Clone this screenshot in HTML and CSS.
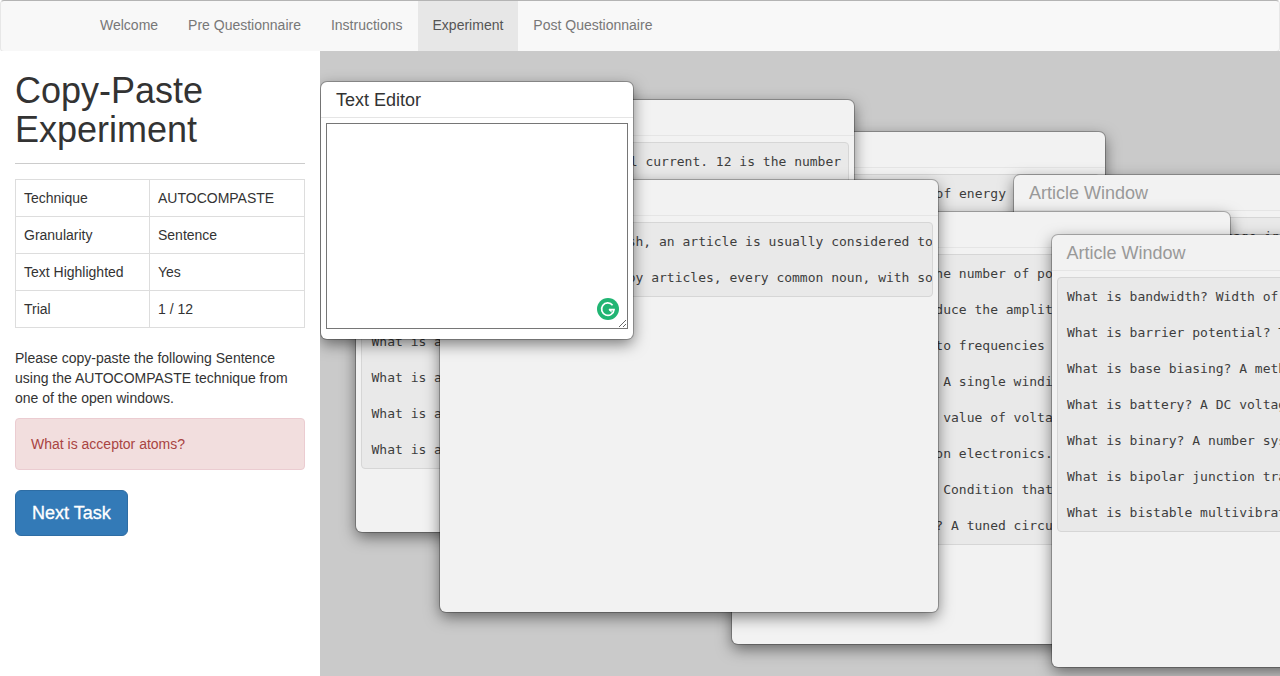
FILE: index.html
```html
<!DOCTYPE html>
<html lang="en">
<head>
  <meta charset="UTF-8">
  <meta name="viewport" content="width=device-width, initial-scale=1.0">
  <title>Copy-Paste Experiment</title>
  <link rel="stylesheet" href="styles.css">
</head>
<body>
  <nav class="navbar">
    <ul class="nav-links">
      <li><a href="#">Welcome</a></li>
      <li><a href="#">Pre Questionnaire</a></li>
      <li><a href="#">Instructions</a></li>
      <li class="active"><a href="#">Experiment</a></li>
      <li><a href="#">Post Questionnaire</a></li>
    </ul>
  </nav>

  <div class="main">
    <aside class="sidebar">
      <h1>Copy-Paste Experiment</h1>
      <hr>
      <table>
        <tbody>
          <tr><td class="label">Technique</td><td>AUTOCOMPASTE</td></tr>
          <tr><td class="label">Granularity</td><td>Sentence</td></tr>
          <tr><td class="label">Text Highlighted</td><td>Yes</td></tr>
          <tr><td class="label">Trial</td><td>1 / 12</td></tr>
        </tbody>
      </table>
      <p class="instructions">Please copy-paste the following Sentence using the AUTOCOMPASTE technique from one of the open windows.</p>
      <div class="alert">What is acceptor atoms?</div>
      <button class="btn-next" type="button">Next Task</button>
    </aside>

    <section class="desktop">
      <div class="window win-b">
        <div class="window-title">Article Window</div>
<pre>What is ampere-hour? A practical amount of energy storage in a cell</pre>
      </div>

      <div class="window win-a">
        <div class="window-title">Article Window</div>
<pre>What is 12 AWG? A wire for typical current. 12 is the number of the gauge

What is a resistor? A part that limits the current in a circuit

What is a capacitor? A part that stores an electric charge

What is a diode? A part that passes current in one direction

What is a fuse? A part that opens when the current is too high

What is ac? A current that changes direction at regular times

What is active region? The region where a transistor amplifies

What is admittance? The reciprocal of the impedance of a circuit

What is alternator? A generator that produces an alternating current</pre>
      </div>

      <div class="window win-e">
        <div class="window-title">Article Window</div>
<pre>What is bias? A diode voltage in a forward direction</pre>
      </div>

      <div class="window win-d">
        <div class="window-title">Article Window</div>
<pre>What is armature pole? the number of poles in the response

What is attenuate? To reduce the amplitude of a signal

What is audio? Relating to frequencies that can be heard

What is autotransformer? A single winding with several taps

What is average voltage? value of voltage over one full cycle

What is avionics? Based on electronics. Used in an aircraft

What is avalanche point? Condition that starts a reverse current

What is band-pass filter? A tuned circuit that passes one band</pre>
      </div>

      <div class="window win-c">
        <div class="window-title">Article Window</div>
<pre>Article note: In English, an article is usually considered to be a type of adjective

In languages that employ articles, every common noun, with some exceptions, is expressed</pre>
      </div>

      <div class="window win-f">
        <div class="window-title">Article Window</div>
<pre>What is bandwidth? Width of the range of frequencies

What is barrier potential? The voltage across a junction

What is base biasing? A method of biasing a transistor

What is battery? A DC voltage source made of cells

What is binary? A number system with only two digits

What is bipolar junction transistor? A three terminal part

What is bistable multivibrator? A circuit with two states</pre>
      </div>

      <div class="window editor">
        <div class="window-title">Text Editor</div>
        <div class="editor-body">
          <textarea></textarea>
          <svg class="grammarly" width="24" height="24" viewBox="0 0 24 24">
            <circle cx="12" cy="12" r="11" fill="#21b573"/>
            <path d="M16.6 8.2A6.2 6.2 0 1 0 18 12.6h-5" fill="none" stroke="#fff" stroke-width="1.7"/>
            <path d="M12.4 12.6l3.2 3.2v-3.2z" fill="#fff"/>
          </svg>
        </div>
      </div>
    </section>
  </div>
</body>
</html>
```

FILE: styles.css
```css
* {
  box-sizing: border-box;
}

html, body {
  height: 100%;
}

body {
  margin: 0;
  overflow: hidden;
  font-family: "Liberation Sans", Arial, sans-serif;
  font-size: 14px;
  line-height: 20px;
  color: #333;
  background-color: #fff;
}

.navbar {
  height: 52px;
  margin-bottom: -1px;
  background-color: #f8f8f8;
  border: 1px solid #e7e7e7;
  border-top-color: #b4b4b4;
  border-radius: 4px;
  padding-left: 84px;
}

.nav-links {
  display: flex;
  margin: 0;
  padding: 0;
  list-style: none;
}

.nav-links a {
  display: block;
  padding: 14px 15px 16px;
  color: #777;
  text-decoration: none;
}

.nav-links .active a {
  height: 50px;
  color: #555;
  background-color: #e7e7e7;
}

.main {
  position: relative;
  display: flex;
  height: 625px;
}

.sidebar {
  width: 320px;
  flex-shrink: 0;
  padding: 20px 15px 0;
  background-color: #fff;
}

h1 {
  margin: 0 0 14px;
  font-size: 36px;
  font-weight: 500;
  line-height: 39px;
}

hr {
  margin: 0 0 15px;
  border: 0;
  border-top: 1px solid #ccc;
}

table {
  width: 290px;
  border-collapse: collapse;
  margin-bottom: 20px;
}

td {
  height: 37px;
  padding: 8px;
  border: 1px solid #ddd;
}

td.label {
  width: 134px;
}

.instructions {
  margin: 0 0 10px;
}

.alert {
  height: 52px;
  padding: 15px;
  margin-bottom: 20px;
  color: #a94442;
  background-color: #f2dede;
  border: 1px solid #ebccd1;
  border-radius: 4px;
}

.btn-next {
  height: 46px;
  padding: 10px 16px;
  font-family: inherit;
  font-size: 18px;
  line-height: 24px;
  color: #fff;
  -webkit-text-stroke: 0.3px #fff;
  background-color: #337ab7;
  border: 1px solid #2e6da4;
  border-radius: 6px;
}

.desktop {
  position: relative;
  flex: 1;
  overflow: hidden;
  background-color: #cacaca;
}

.window {
  position: absolute;
  width: 498px;
  height: 432px;
  padding: 0 5px;
  overflow: hidden;
  background-color: #f2f2f2;
  border-radius: 6px;
  box-shadow: 0 0 0 1px rgba(0, 0, 0, 0.25), 0 5px 15px rgba(0, 0, 0, 0.5);
}

.window-title {
  height: 36px;
  margin: 0 -5px 6px;
  padding: 0 15px;
  font-size: 18px;
  line-height: 36px;
  color: #999;
  border-bottom: 1px solid #e5e5e5;
}

pre {
  margin: 0;
  padding: 9.5px;
  overflow: hidden;
  font-family: "DejaVu Sans Mono", "Liberation Mono", monospace;
  font-size: 13px;
  line-height: 18px;
  color: #3d3d3d;
  background-color: #e9e9e9;
  border: 1px solid #d6d6d6;
  border-radius: 4px;
}

.win-a { left: 36px; top: 49px; }
.win-b { left: 287px; top: 81px; }
.win-e { left: 694px; top: 124px; }
.win-d { left: 412px; top: 161px; }
.win-c { left: 120px; top: 129px; }
.win-f { left: 731.5px; top: 184px; }

.editor {
  left: 1px;
  top: 31px;
  width: 312px;
  height: 257px;
  background-color: #fff;
}

.editor .window-title {
  margin-bottom: 5px;
  color: #333;
}

.editor-body {
  position: relative;
}

.editor textarea {
  display: block;
  width: 302px;
  height: 206px;
  padding: 2px;
  background-color: #fff;
  border: 1px solid #767676;
}

.grammarly {
  position: absolute;
  right: 8px;
  bottom: 8px;
}
```
